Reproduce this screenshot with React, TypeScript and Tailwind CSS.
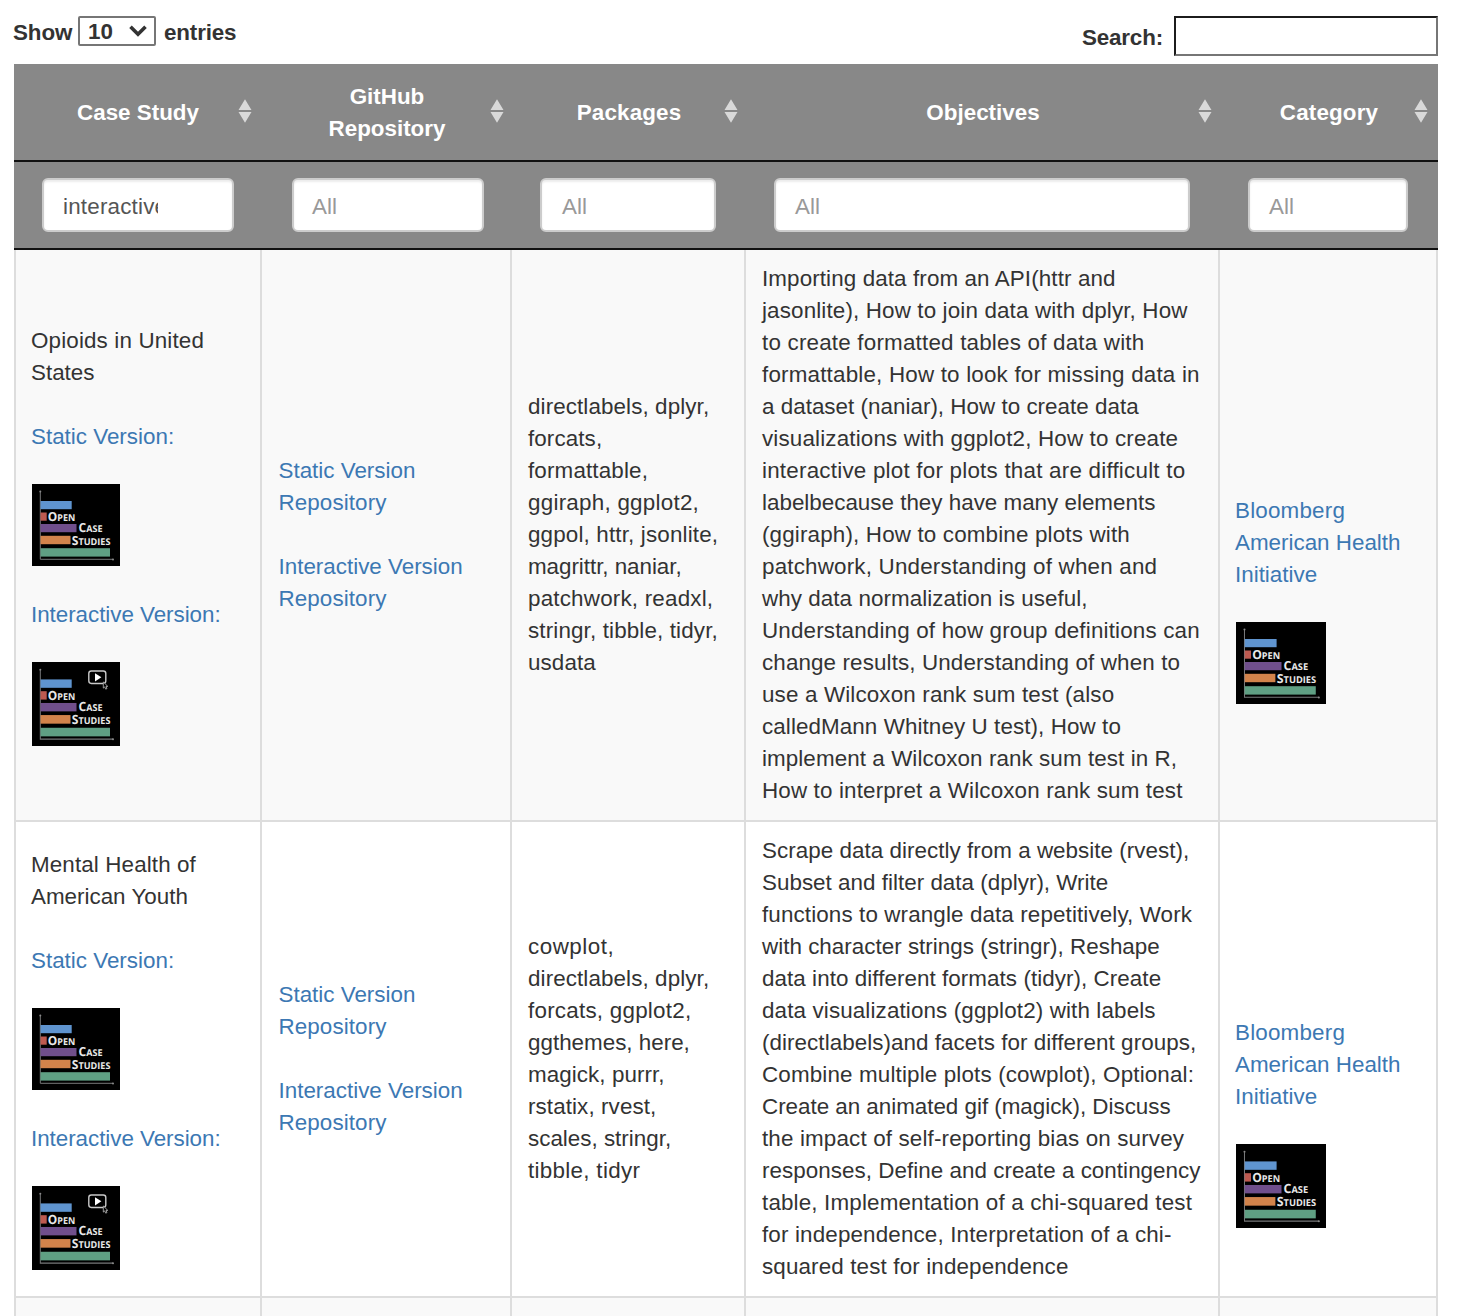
import React from "react";

type Line = string | [text: string, tracking: number];

const columns: { title: Line[]; width: string; sort: string; filter: string }[] = [
  { title: ["Case Study"], width: "w-[248px]", sort: "right-[10px]", filter: "ml-[28px] w-[192px] pl-[19px]" },
  { title: ["GitHub", "Repository"], width: "w-[250px]", sort: "right-[8px]", filter: "ml-[30px] w-[192px] pl-[18px]" },
  { title: [["Packages", 0.15]], width: "w-[234px]", sort: "right-[8px]", filter: "ml-[28px] w-[176px] pl-[20px]" },
  { title: ["Objectives"], width: "w-[474px]", sort: "right-[8px]", filter: "ml-[28px] w-[416px] pl-[19px]" },
  { title: [["Category", 0.15]], width: "w-[218px]", sort: "right-[10px]", filter: "ml-[28px] w-[160px] pl-[19px]" },
];

const rows: {
  name: Line[];
  packages: Line[];
  objectives: Line[];
  style: string;
  categoryTop: string;
  categoryLogo: string;
}[] = [
  {
    name: [["Opioids in United", 0.15], "States"],
    packages: [
      ["directlabels, dplyr,", 0.1],
      ["forcats,", 0.1],
      ["formattable,", 0.15],
      ["ggiraph, ggplot2,", 0.25],
      ["ggpol, httr, jsonlite,", 0.16],
      ["magrittr, naniar,", -0.04],
      ["patchwork, readxl,", 0.2],
      ["stringr, tibble, tidyr,", 0.14],
      ["usdata", 0.1],
    ],
    objectives: [
      ["Importing data from an API(httr and", 0.11],
      ["jasonlite), How to join data with dplyr, How", 0.14],
      ["to create formatted tables of data with", 0.2],
      ["formattable, How to look for missing data in", 0.19],
      ["a dataset (naniar), How to create data", 0.02],
      ["visualizations with ggplot2, How to create", 0.16],
      ["interactive plot for plots that are difficult to", 0.22],
      "labelbecause they have many elements",
      ["(ggiraph), How to combine plots with", 0.16],
      ["patchwork, Understanding of when and", 0.19],
      ["why data normalization is useful,", 0.06],
      ["Understanding of how group definitions can", 0.17],
      ["change results, Understanding of when to", 0.12],
      ["use a Wilcoxon rank sum test (also", 0.15],
      ["calledMann Whitney U test), How to", 0.09],
      ["implement a Wilcoxon rank sum test in R,", 0.08],
      ["How to interpret a Wilcoxon rank sum test", 0.15],
    ],
    style: "h-[572px] bg-[#f9f9f9]",
    categoryTop: "pt-[244px]",
    categoryLogo: "h-[82px]",
  },
  {
    name: [["Mental Health of", 0.12], "American Youth"],
    packages: [
      ["cowplot,", 0.5],
      ["directlabels, dplyr,", 0.1],
      ["forcats, ggplot2,", 0.24],
      "ggthemes, here,",
      ["magick, purrr,", 0.07],
      ["rstatix, rvest,", 0.1],
      "scales, stringr,",
      ["tibble, tidyr", 0.3],
    ],
    objectives: [
      ["Scrape data directly from a website (rvest),", 0.04],
      ["Subset and filter data (dplyr), Write", 0.02],
      ["functions to wrangle data repetitively, Work", 0.12],
      ["with character strings (stringr), Reshape", 0.02],
      ["data into different formats (tidyr), Create", 0.06],
      ["data visualizations (ggplot2) with labels", 0.13],
      ["(directlabels)and facets for different groups,", 0.06],
      ["Combine multiple plots (cowplot), Optional:", 0.15],
      ["Create an animated gif (magick), Discuss", -0.02],
      ["the impact of self-reporting bias on survey", 0.15],
      ["responses, Define and create a contingency", 0.04],
      ["table, Implementation of a chi-squared test", 0.16],
      ["for independence, Interpretation of a chi-", 0.15],
      ["squared test for independence", 0.14],
    ],
    style: "h-[476px] bg-white",
    categoryTop: "pt-[194px]",
    categoryLogo: "h-[84px]",
  },
];

function Lines({ lines }: { lines: Line[] }) {
  return (
    <>
      {lines.map((line) => {
        const [text, tracking] = typeof line === "string" ? [line, 0] : line;
        return (
          <span key={text} className="block whitespace-nowrap pt-[2px] leading-[30px]" style={{ letterSpacing: tracking }}>
            {text}
          </span>
        );
      })}
    </>
  );
}

function Logo({ className, interactive = false }: { className: string; interactive?: boolean }) {
  return (
    <svg viewBox="0 0 88 82" preserveAspectRatio="none" className={`block ${className}`}>
      <rect width="88" height="82" fill="#000" />
      <path d="M8.3 8V75.3H81" fill="none" stroke="#77787a" strokeWidth="1" />
      <circle cx="8.3" cy="7.6" r="1" fill="#8b8b8b" />
      <circle cx="81" cy="75.4" r="1" fill="#8b8b8b" />
      <rect x="8.5" y="17" width="31.2" height="8.2" fill="#5f94cf" />
      <rect x="8.5" y="28.5" width="6.2" height="8.2" fill="#bd5a50" />
      <rect x="8.5" y="40" width="36" height="8.2" fill="#704f8c" />
      <rect x="8.5" y="51.8" width="30" height="8.4" fill="#d2834b" />
      <rect x="8.5" y="64.2" width="69.5" height="8.4" fill="#5f9f83" />
      <g fill="#e9e9e9" textRendering="geometricPrecision" fontFamily="'Open Sans', sans-serif" fontWeight="700" fontSize="9.3">
        <text x="15.8" y="37" textLength="27.4" lengthAdjust="spacingAndGlyphs"><tspan fontSize="12.4">O</tspan>PEN</text>
        <text x="46.5" y="48.2" textLength="24" lengthAdjust="spacingAndGlyphs"><tspan fontSize="12.4">C</tspan>ASE</text>
        <text x="39.8" y="61" textLength="38.6" lengthAdjust="spacingAndGlyphs"><tspan fontSize="12.4">S</tspan>TUDIES</text>
      </g>
      {interactive && (
        <g>
          <rect x="56.8" y="8.7" width="17" height="12.2" rx="2.5" fill="none" stroke="#c9c9c9" strokeWidth="1.4" />
          <path d="M63 11v8l6.4-4z" fill="#fff" />
          <path d="M71.3 19.5v6l1.4-1.2 1 2.2 1.3-.6-1-2.1h1.8z" fill="#000" stroke="#bbb" strokeWidth=".8" />
        </g>
      )}
    </svg>
  );
}

function SortIcon({ className }: { className: string }) {
  return (
    <svg viewBox="0 0 14 24" className={`absolute top-[35px] h-[24px] w-[14px] ${className}`}>
      <path d="M7 .3 13.5 11H.5zM7 23.7.5 13h13z" fill="#d9d9d9" />
    </svg>
  );
}

const link = "block text-[#3c78b3]";

export default function App() {
  return (
    <div className="h-[1316px] w-[1458px] overflow-hidden bg-white pl-[14px] font-['Liberation_Sans',Arial,sans-serif] text-[22.4px] leading-[32px] text-[#333]">
      <div className="flex h-[64px] w-[1424px] items-start justify-between font-bold">
        <label className="-ml-px flex items-start pt-[16px]">
          <span className="w-[65px] whitespace-nowrap pt-px tracking-[-0.1px]">Show</span>
          <span className="flex h-[30px] w-[78px] items-center justify-between rounded-[2px] border-2 border-[#767676] pl-[8px] pr-[7px]">
            <span className="pt-[2px]">10</span>
            <svg viewBox="0 0 18 12" className="-mt-px h-[12px] w-[18px]">
              <path d="M1.5 1.8 9 9.3l7.5-7.5" fill="none" stroke="#333" strokeWidth="3.6" />
            </svg>
          </span>
          <span className="ml-[8px] pt-px tracking-[-0.15px]">entries</span>
        </label>
        <label className="flex items-start pt-[16px]">
          <span className="mr-[11px] pt-[6px] tracking-[-0.15px]">Search:</span>
          <input className="h-[40px] w-[264px] border-2 border-t-[#1c1c1c] border-l-[#1c1c1c] border-r-[#767676] border-b-[#767676] bg-white outline-none" />
        </label>
      </div>

      <div className="w-[1424px]">
        <div className="flex h-[98px] border-b-2 border-[#111] bg-[#888] font-bold text-white">
          {columns.map((c) => (
            <div key={c.width} className={`relative flex shrink-0 flex-col items-center justify-center ${c.width}`}>
              <div className="text-center">
                <Lines lines={c.title} />
              </div>
              <SortIcon className={c.sort} />
            </div>
          ))}
        </div>
        <div className="flex h-[88px] border-b-2 border-[#111] bg-[#888] pt-[16px]">
          {columns.map((c, i) => (
            <div key={c.width} className={`shrink-0 ${c.width}`}>
              <div className={`flex h-[54px] items-center rounded-[6px] border-2 border-[#ccc] bg-white pt-[3px] shadow-[inset_0_2px_2px_rgba(0,0,0,0.075)] ${c.filter}`}>
                {i === 0 ? (
                  <span className="w-[95px] overflow-hidden whitespace-nowrap tracking-[0.2px] text-[#555]">interactive</span>
                ) : (
                  <span className="text-[#999]">All</span>
                )}
              </div>
            </div>
          ))}
        </div>

        {rows.map((r) => (
          <div key={r.objectives.length} className={`flex border-b-2 border-l-2 border-[#ddd] ${r.style}`}>
            <div className="flex w-[246px] shrink-0 flex-col justify-center border-r-2 border-[#ddd] pl-[15px]">
              <Lines lines={r.name} />
              <a className={`mt-[32px] ${link}`}><Lines lines={["Static Version:"]} /></a>
              <Logo className="ml-px mt-[32px] h-[82px] w-[88px]" />
              <a className={`mt-[32px] ${link}`}><Lines lines={[["Interactive Version:", -0.04]]} /></a>
              <Logo interactive className="ml-px mt-[32px] h-[84px] w-[88px]" />
            </div>
            <div className="flex w-[250px] shrink-0 flex-col justify-center border-r-2 border-[#ddd] pb-[2px] pl-[16.5px]">
              <a className={link}><Lines lines={["Static Version", ["Repository", 0.1]]} /></a>
              <a className={`mt-[32px] ${link}`}><Lines lines={["Interactive Version", ["Repository", 0.1]]} /></a>
            </div>
            <div className="flex w-[234px] shrink-0 flex-col justify-center border-r-2 border-[#ddd] pb-[2px] pl-[16px]">
              <Lines lines={r.packages} />
            </div>
            <div className="flex w-[474px] shrink-0 flex-col justify-center border-r-2 border-[#ddd] pb-[2px] pl-[16px]">
              <Lines lines={r.objectives} />
            </div>
            <div className={`w-[218px] shrink-0 border-r-2 border-[#ddd] pl-[15px] ${r.categoryTop}`}>
              <a className={link}><Lines lines={[["Bloomberg", 0.2], "American Health", "Initiative"]} /></a>
              <Logo className={`ml-px mt-[32px] w-[90px] ${r.categoryLogo}`} />
            </div>
          </div>
        ))}
        <div className="flex h-[18px] border-l-2 border-[#ddd] bg-[#f9f9f9]">
          <div className="w-[246px] border-r-2 border-[#ddd]" />
          <div className="w-[250px] border-r-2 border-[#ddd]" />
          <div className="w-[234px] border-r-2 border-[#ddd]" />
          <div className="w-[474px] border-r-2 border-[#ddd]" />
          <div className="w-[218px] border-r-2 border-[#ddd]" />
        </div>
      </div>
    </div>
  );
}
